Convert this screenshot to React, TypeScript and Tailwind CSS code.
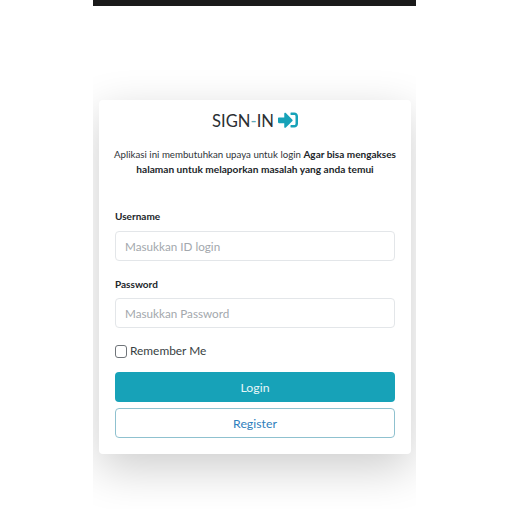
import React from "react";
import { FaSignInAlt } from "react-icons/fa";

export default function App() {
  return (
    <div className="flex justify-center bg-white h-[509px] overflow-hidden font-['Lato','Noto_Sans',sans-serif] text-[#212529]">
      <div className="w-[323px] h-[509px] overflow-hidden">
        <div className="h-[6px] bg-[#1a1a1a]" />
        <div className="pt-[94px] pl-[6px] pr-[5px]">
          <div className="w-[312px] h-[354px] rounded-[4px] bg-white px-4 pt-[8px] shadow-[0_14px_46px_rgba(0,0,0,0.2)]">
            {/* Heading */}
            <h1 className="flex items-center justify-center gap-[4px] h-[25px] text-[16.6px] leading-[25px] font-normal text-[#2b2f33]">
              <span className="pt-[1px]">
                SIGN<span className="text-[#5fa9b8]">-</span>IN
              </span>
              <FaSignInAlt className="-mt-[1px] h-[20px] w-[20px] text-[#17a2b8]" />
            </h1>

            <p className="mt-[14px] -ml-[1px] w-[282px] text-center text-[9.7px] leading-[15px] text-[#2f3438] whitespace-nowrap">
              Aplikasi ini membutuhkan upaya untuk login{" "}
              <b className="text-[10px] text-[#212529]">Agar bisa mengakses</b>
              <br />
              <b className="text-[10.15px] text-[#212529]">halaman untuk melaporkan masalah yang anda temui</b>
            </p>

            {/* Form */}
            <form className="mt-[31px]">
              <label className="block h-[16px] text-[10px] leading-[16px] font-bold">Username</label>
              <input
                placeholder="Masukkan ID login"
                className="mt-[7px] block w-[280px] h-[30px] rounded-[4px] border border-[#e3e6e9] px-[9px] text-[11.7px] placeholder:text-[#a3a8ad] outline-none"
              />
              <label className="mt-[15px] block h-[16px] text-[10px] leading-[16px] font-bold">Password</label>
              <input
                placeholder="Masukkan Password"
                className="mt-[6px] block w-[280px] h-[30px] rounded-[4px] border border-[#e3e6e9] px-[9px] text-[11.7px] placeholder:text-[#a3a8ad] outline-none"
              />
              <label className="mt-[16px] flex items-center gap-[3px] h-[14px] text-[11.9px] leading-[14px] text-[#3a3f44]">
                <span className="block w-[12px] h-[13px] rounded-[3px] border border-[#6f7479] bg-white" />
                Remember Me
              </label>
              <button
                type="button"
                className="mt-[14px] block w-[280px] h-[30px] rounded-[4px] bg-[#17a2b8] pt-[2px] text-[12.3px] text-[#e6f6f8]"
              >
                Login
              </button>
              <button
                type="button"
                className="mt-[6px] block w-[280px] h-[30px] rounded-[4px] border border-[#8fc1cf] bg-white pt-[2px] text-[12.3px] text-[#2f80bd]"
              >
                Register
              </button>
            </form>
          </div>
        </div>
      </div>
    </div>
  );
}
